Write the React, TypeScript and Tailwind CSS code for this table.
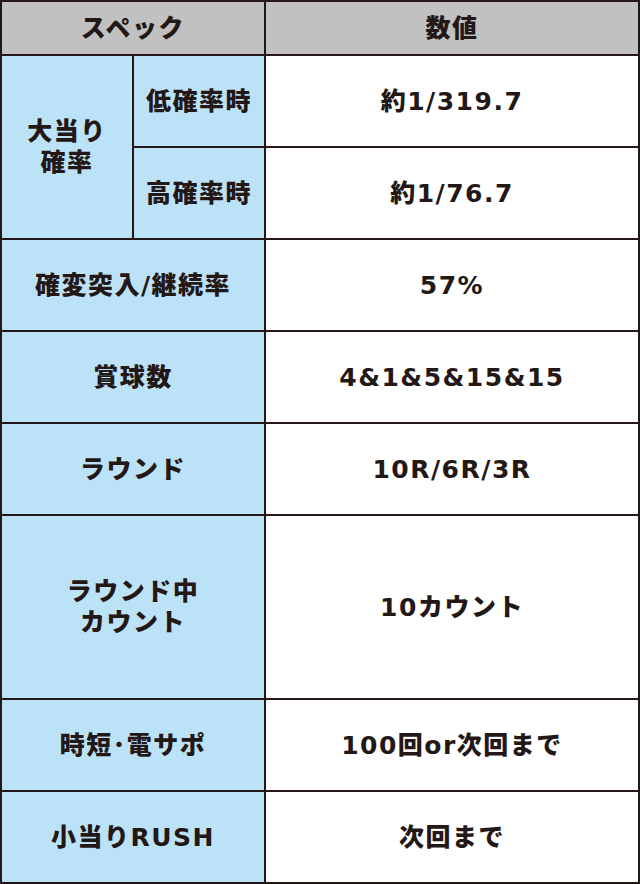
import React from "react";

const font = { fontFamily: '"DejaVu Sans", "Noto Sans CJK JP", sans-serif' };

const Cell = ({ className = "", children }: { className?: string; children: React.ReactNode }) => (
  <div className={`flex items-center justify-center text-center font-black text-[#231815] ${className}`}>{children}</div>
);

export default function App() {
  const rows: [string, string][] = [
    ["確変突入/継続率", "57%"],
    ["賞球数", "4&1&5&15&15"],
    ["ラウンド", "10R/6R/3R"],
  ];
  return (
    <div
      style={font}
      className="w-[640px] h-[884px] bg-[#231815] p-[2px] grid grid-cols-[130px_130px_372px] grid-rows-[52px_90px_90px_90px_90px_90px_182px_90px_90px] gap-[2px] text-[25px] leading-[31px] tracking-[1.5px]"
    >
      <Cell className="col-span-2 bg-[#c0c1c0]">スペック</Cell>
      <Cell className="bg-[#c0c1c0]">数値</Cell>

      <Cell className="row-span-2 bg-[#bce2f8]">
        <span>
          大当り
          <br />
          確率
        </span>
      </Cell>
      <Cell className="bg-[#bce2f8]">低確率時</Cell>
      <Cell className="bg-white">約1/319.7</Cell>
      <Cell className="bg-[#bce2f8]">高確率時</Cell>
      <Cell className="bg-white">約1/76.7</Cell>

      {rows.map(([a, b]) => (
        <React.Fragment key={a}>
          <Cell className="col-span-2 bg-[#bce2f8]">{a}</Cell>
          <Cell className="bg-white">{b}</Cell>
        </React.Fragment>
      ))}

      <Cell className="col-span-2 bg-[#bce2f8]">
        <span>
          ラウンド中
          <br />
          カウント
        </span>
      </Cell>
      <Cell className="bg-white">10カウント</Cell>

      <Cell className="col-span-2 bg-[#bce2f8]">時短･電サポ</Cell>
      <Cell className="bg-white">100回or次回まで</Cell>

      <Cell className="col-span-2 bg-[#bce2f8]">小当りRUSH</Cell>
      <Cell className="bg-white">次回まで</Cell>
    </div>
  );
}
